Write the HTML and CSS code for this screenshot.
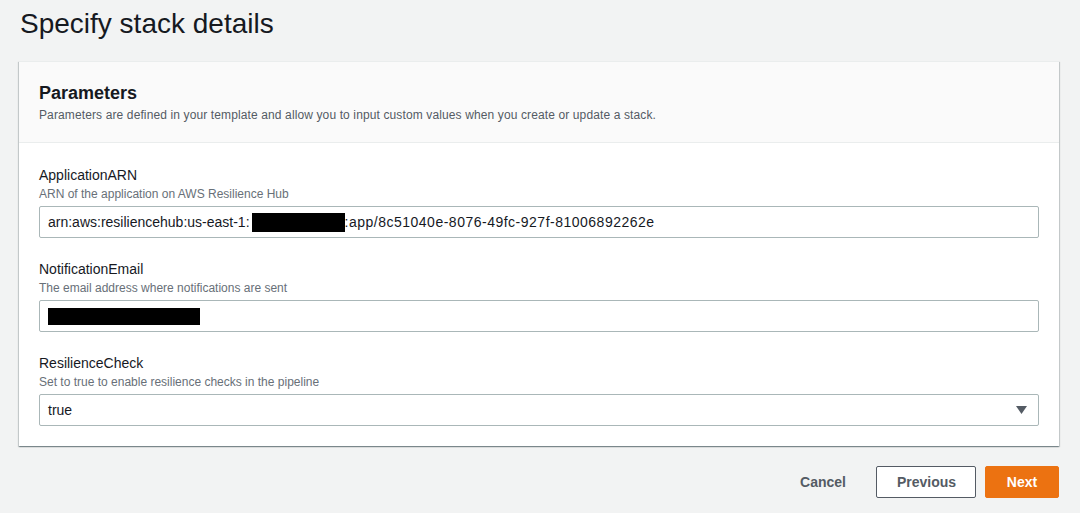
FILE: index.html
```html
<!DOCTYPE html>
<html lang="en">
<head>
<meta charset="utf-8">
<title>Specify stack details</title>
<link rel="stylesheet" href="styles.css">
</head>
<body>
<main class="page">
  <h1 class="page-title">Specify stack details</h1>
  <section class="card">
    <header class="card-header">
      <h2 class="card-title">Parameters</h2>
      <p class="card-desc">Parameters are defined in your template and allow you to input custom values when you create or update a stack.</p>
    </header>
    <div class="card-body">
      <div class="field">
        <label class="field-label">ApplicationARN</label>
        <div class="field-desc">ARN of the application on AWS Resilience Hub</div>
        <div class="input"><span>arn:aws:resiliencehub:us-east-1:</span><span class="redact redact-arn"></span><span class="arn-id">:app/8c51040e-8076-49fc-927f-81006892262e</span></div>
      </div>
      <div class="field">
        <label class="field-label">NotificationEmail</label>
        <div class="field-desc">The email address where notifications are sent</div>
        <div class="input"><span class="redact redact-email"></span></div>
      </div>
      <div class="field">
        <label class="field-label">ResilienceCheck</label>
        <div class="field-desc">Set to true to enable resilience checks in the pipeline</div>
        <div class="input select"><span>true</span><svg class="caret" width="11" height="8" viewBox="0 0 11 8"><path d="M0 0 H11 L5.5 8 Z" fill="#545b64"/></svg></div>
      </div>
    </div>
  </section>
  <div class="actions">
    <button class="btn btn-link">Cancel</button>
    <button class="btn btn-normal">Previous</button>
    <button class="btn btn-primary">Next</button>
  </div>
</main>
</body>
</html>
```
FILE: styles.css
```css
* { box-sizing: border-box; }
html, body { margin: 0; padding: 0; }
body {
  background: #f2f3f3;
  font-family: "Liberation Sans", Arial, sans-serif;
  color: #16191f;
  width: 1080px;
  height: 513px;
  overflow: hidden;
}
.page { display: flex; flex-direction: column; padding: 0 21px 0 19px; }
.page-title {
  margin: 0;
  padding: 6px 0 0 1px;
  font-size: 28px;
  line-height: 36px;
  font-weight: 400;
  color: #16191f;
  height: 61px;
}
.card {
  background: #fff;
  border-top: 1px solid #eaeded;
  box-shadow: 0 1px 1px 0 rgba(0,28,36,.3), 1px 1px 1px 0 rgba(0,28,36,.15), -1px 1px 1px 0 rgba(0,28,36,.15);
}
.card-header {
  background: #fafafa;
  border-bottom: 1px solid #eaeded;
  padding: 19px 20px 19px;
}
.card-title { margin: 0; font-size: 18px; line-height: 24px; font-weight: 700; color: #16191f; }
.card-desc { margin: 2px 0 0; font-size: 12px; line-height: 16px; color: #545b64; letter-spacing: 0.12px; }
.card-body { padding: 21px 20px 20px; display: flex; flex-direction: column; gap: 20px; }
.field { display: flex; flex-direction: column; }
.field-label { font-size: 14px; line-height: 22px; color: #16191f; }
.field-desc { font-size: 12px; line-height: 16px; color: #687078; margin-bottom: 4px; }
.input {
  height: 32px;
  border: 1px solid #aab7b8;
  border-radius: 2px;
  padding: 0 8px;
  display: flex;
  align-items: center;
  font-size: 14px;
  color: #16191f;
}
.arn-id { letter-spacing: 0.5px; }
.redact { display: inline-block; background: #000; height: 19px; }
.redact-arn { width: 93px; margin-left: 2px; }
.redact-email { width: 152px; height: 17px; }
.select { justify-content: space-between; padding-right: 11px; }
.actions {
  display: flex;
  justify-content: flex-end;
  gap: 9px;
  margin-top: 20px;
}
.btn {
  height: 32px;
  font-family: inherit;
  font-size: 14px;
  font-weight: 700;
  border-radius: 2px;
  padding: 0 20px;
  cursor: pointer;
}
.btn-link { background: transparent; border: 1px solid transparent; color: #545b64; }
.btn-normal { background: #fff; border: 1px solid #545b64; color: #545b64; width: 100px; }
.btn-primary { background: #ec7211; border: 1px solid #ec7211; color: #fff; width: 74px; }
```
